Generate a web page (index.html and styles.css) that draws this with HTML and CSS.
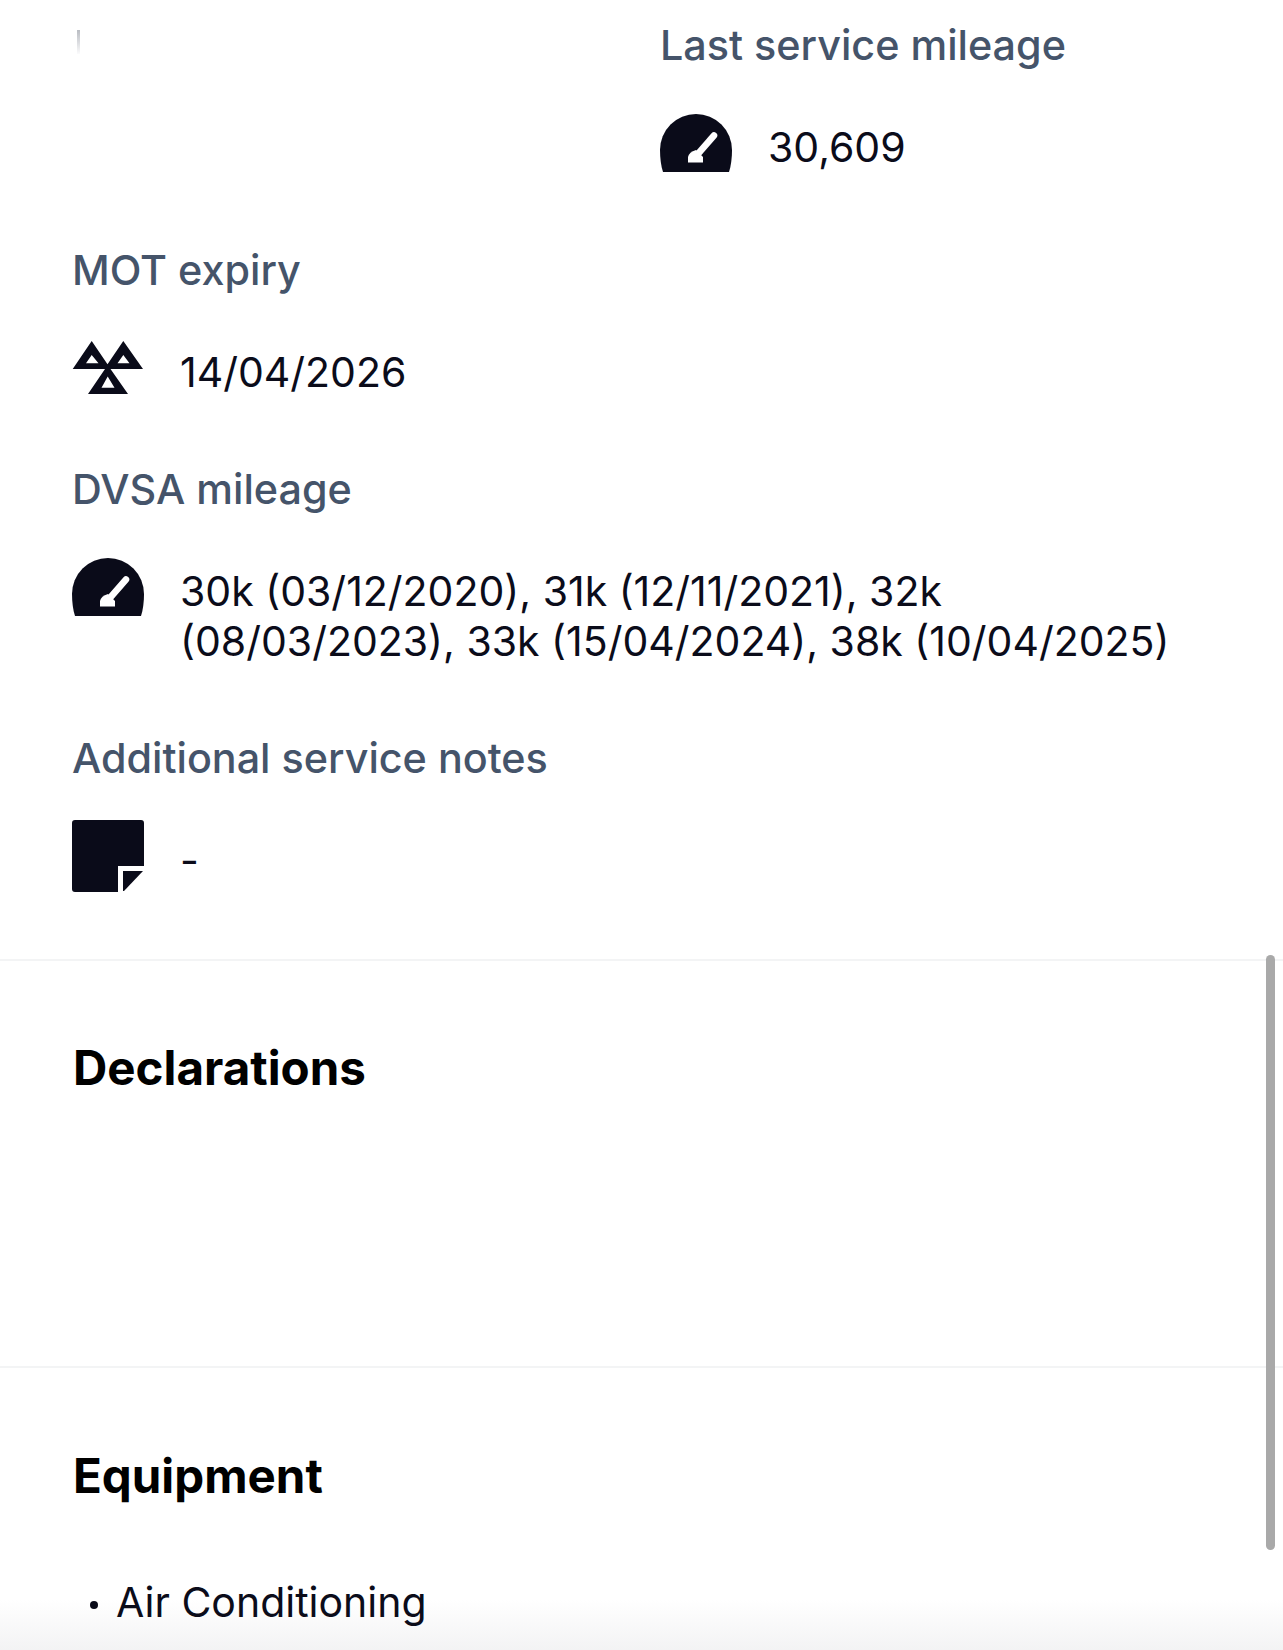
FILE: index.html
```html
<html>

<head>
    <meta name="viewport" content="width=device-width, initial-scale=1.0">
    <title>Vehicle details</title>
    <link rel="stylesheet" href="styles.css">
</head>

<body>

    <div class="fade"></div>

    <div class="page">

        <section class="section specs">
            <div class="spec-grid">
                <div class="spec spec-hidden">
                    <span class="smudge"></span>
                </div>
                <div class="spec">
                    <div class="label">Last service mileage</div>
                    <div class="row">
                        <svg class="icon gauge" viewBox="0 0 72 58">
                            <path class="dark" d="M3 58C1 52 0 44 0 36a36 36 0 0 1 72 0c0 8-1 16-3 22z"/>
                            <path class="needle" d="M54 21.500L37 41"/>
                            <path class="light" d="M36 36L43 43V48.500H28V43q1-5 8-7z"/>
                        </svg>
                        <div class="value">30,609</div>
                    </div>
                </div>
            </div>

            <div class="spec">
                <div class="label">MOT expiry</div>
                <div class="row">
                    <svg class="icon tri" viewBox="0 0 72 54">
                        <path class="dark" fill-rule="evenodd" d="M19.700 0L35.500 23.300 51.300 0 71 28H38.500L56 53H16L33 28H.7zM19.700 14L14 22.300H26.500zM51.300 14L45.500 22.300H57.500zM35.700 35.500L29.500 46.800H42.500z"/>
                    </svg>
                    <div class="value">14/04/2026</div>
                </div>
            </div>

            <div class="spec">
                <div class="label">DVSA mileage</div>
                <div class="row">
                    <svg class="icon gauge" viewBox="0 0 72 58">
                        <path class="dark" d="M3 58C1 52 0 44 0 36a36 36 0 0 1 72 0c0 8-1 16-3 22z"/>
                        <path class="needle" d="M54 21.500L37 41"/>
                        <path class="light" d="M36 36L43 43V48.500H28V43q1-5 8-7z"/>
                    </svg>
                    <div class="value">30k (03/12/2020), 31k (12/11/2021), 32k (08/03/2023), 33k (15/04/2024), 38k (10/04/2025)</div>
                </div>
            </div>

            <div class="spec">
                <div class="label">Additional service notes</div>
                <div class="row">
                    <svg class="icon note" viewBox="0 0 72 72">
                        <path class="dark" d="M3 0H69a3 3 0 0 1 3 3V46H46V72H3a3 3 0 0 1-3-3V3a3 3 0 0 1 3-3z"/>
                        <path class="dark" d="M51 51H71L52 71H51z"/>
                    </svg>
                    <div class="value">-</div>
                </div>
            </div>
        </section>

        <section class="section declarations">
            <h2>Declarations</h2>
        </section>

        <section class="section equipment">
            <h2>Equipment</h2>
            <ul>
                <li>Air Conditioning</li>
            </ul>
        </section>

    </div>

    <div class="scrollbar"></div>

</body>

</html>
```

FILE: styles.css
```css
html {
    background-color: #fff;
}

body {
    font-family: Inter, "Liberation Sans", sans-serif;
    color: #0b0c1a;
    margin: 0;
    padding: 0;
    height: 1650px;
    overflow: hidden;
    position: relative;
    background-color: #fff;
}

.page {
    position: relative;
}

.section {
    padding: 0 72px;
    border-bottom: 2px solid #f3f4f5;
}

.specs {
    height: 961px;
    box-sizing: border-box;
    padding-top: 22px;
}

.spec-grid {
    display: grid;
    grid-template-columns: 588px 1fr;
}

.spec {
    margin-bottom: 68px;
}

.spec-grid .spec {
    margin-bottom: 74px;
}

.spec-hidden {
    padding-top: 8px;
}

.smudge {
    display: block;
    width: 3px;
    height: 24px;
    margin-left: 5px;
    background: linear-gradient(#b9bcc2, #fbfbfc);
}

.label {
    font-size: 41.300px;
    font-weight: 500;
    line-height: 46px;
    color: #45546a;
    margin-bottom: 38px;
}

.row {
    display: flex;
    align-items: flex-start;
    gap: 36px;
}

.icon {
    width: 72px;
    flex-shrink: 0;
    display: block;
}

.gauge {
    margin-top: 8px;
}

.tri {
    margin-top: 10px;
}

.note {
    margin-top: 1px;
}

.dark {
    fill: #0a0b19;
}

.light {
    fill: #fff;
}

.needle {
    fill: none;
    stroke: #fff;
    stroke-width: 6.500px;
    stroke-linecap: round;
}

.value {
    font-size: 41px;
    line-height: 50px;
    max-width: 1000px;
    padding-top: 16px;
    margin-bottom: 1px;
}

h2 {
    font-size: 47.500px;
    line-height: 56px;
    font-weight: 700;
    color: #000;
    margin: 0 0 0 1px;
}

.declarations {
    height: 407px;
    box-sizing: border-box;
    padding-top: 79px;
}

.equipment {
    border-bottom: none;
    padding-top: 80px;
}

ul {
    list-style: none;
    margin: 73px 0 0 0;
    padding: 0;
}

li {
    font-size: 41px;
    line-height: 50px;
    padding-left: 44px;
    position: relative;
}

li::before {
    content: "";
    position: absolute;
    left: 18px;
    top: 24px;
    width: 8px;
    height: 8px;
    border-radius: 50%;
    background-color: #0a0b19;
}

.scrollbar {
    position: absolute;
    left: 1266px;
    top: 955px;
    width: 9px;
    height: 595px;
    border-radius: 5px;
    background-color: #a9a9a9;
}

.fade {
    position: absolute;
    left: 0;
    right: 0;
    bottom: 0;
    height: 50px;
    background: linear-gradient(rgba(243, 243, 244, 0), #f3f3f4);
}
```
